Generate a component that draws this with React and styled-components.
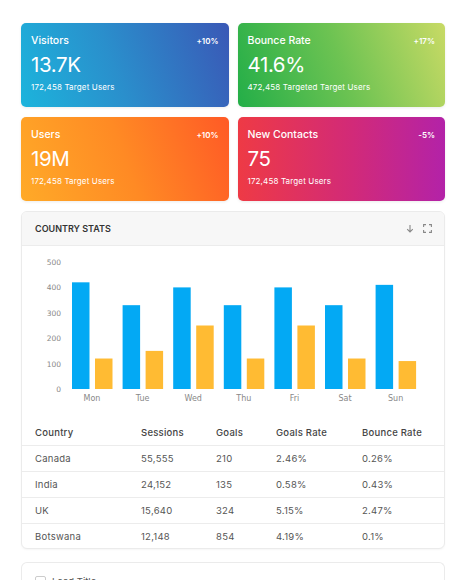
import React from 'react';
import styled, { createGlobalStyle } from 'styled-components';

const GlobalStyle = createGlobalStyle`
	body {
		margin: 0;
		background: #ffffff;
		font-family: Inter, 'Open Sans', sans-serif;
		color: #333;
	}
`;

const Page = styled.div`
	padding: 23px 7px 0 21px;
	display: flex;
	flex-direction: column;
	gap: 10px;
`;

const StatGrid = styled.div`
	display: grid;
	grid-template-columns: 1fr 1fr;
	gap: 10px 9px;
`;

const StatCard = styled.div`
	height: 84px;
	box-sizing: border-box;
	border-radius: 5px;
	padding: 11px 10px 0 10px;
	color: #fff;
	background: ${(p) => p.$bg};
	box-shadow: 0 1px 3px rgba(0, 0, 0, 0.08);
`;

const StatTop = styled.div`
	display: flex;
	justify-content: space-between;
	align-items: center;
`;

const StatTitle = styled.div`
	font-size: 10.5px;
	font-weight: 500;
`;

const StatChange = styled.div`
	font-size: 8px;
	font-weight: 600;
`;

const StatValue = styled.div`
	font-size: 20.5px;
	font-weight: 400;
	margin-top: 5px;
	letter-spacing: -0.4px;
`;

const StatSub = styled.div`
	font-size: 8px;
	letter-spacing: 0.15px;
	margin-top: 5px;
`;

const Card = styled.div`
	border: 1px solid #ebebeb;
	border-radius: 6px;
	background: #fff;
	box-shadow: 0 1px 2px rgba(0, 0, 0, 0.04);
	overflow: hidden;
`;

const CardHeader = styled.div`
	height: 34px;
	box-sizing: border-box;
	background: #f7f7f7;
	border-bottom: 1px solid #ececec;
	display: flex;
	align-items: center;
	justify-content: space-between;
	padding: 0 12px 0 13px;
`;

const CardTitle = styled.div`
	font-size: 9px;
	font-weight: 600;
	color: #333;
`;

const HeaderTools = styled.div`
	display: flex;
	gap: 9px;
	align-items: center;
	color: #888;
`;

const Table = styled.div`
	display: flex;
	flex-direction: column;
`;

const Row = styled.div`
	display: grid;
	grid-template-columns: 106px 75px 60px 86px 1fr;
	padding-left: 13px;
	height: ${(p) => (p.$last ? '24px' : '26px')};
	align-items: center;
	font-size: 9.5px;
	letter-spacing: 0.25px;
	color: ${(p) => (p.$head ? '#444' : '#555')};
	font-weight: ${(p) => (p.$head ? 500 : 400)};
	border-bottom: ${(p) => (p.$last ? 'none' : '1px solid #ececec')};
	box-sizing: border-box;
`;

const LeadCard = styled.div`
	border: 1px solid #ebebeb;
	border-bottom: none;
	border-radius: 6px 6px 0 0;
	height: 30px;
	padding: 8px 13px 0;
	box-sizing: border-box;
	display: flex;
	align-items: center;
	gap: 6px;
	margin-top: 3px;
	font-size: 9.5px;
	color: #555;
`;

const CheckBox = styled.span`
	width: 9px;
	height: 9px;
	border: 1px solid #ccc;
	border-radius: 2px;
`;

const stats = [
	{ title: 'Visitors', change: '+10%', value: '13.7K', sub: '172,458 Target Users', bg: 'linear-gradient(70deg, #1cb4dc 0%, #2a8fcc 45%, #3a58b6 100%)' },
	{ title: 'Bounce Rate', change: '+17%', value: '41.6%', sub: '472,458 Targeted Target Users', bg: 'linear-gradient(70deg, #23ae48 0%, #6dc352 50%, #c8da65 100%)' },
	{ title: 'Users', change: '+10%', value: '19M', sub: '172,458 Target Users', bg: 'linear-gradient(70deg, #ffaa28 0%, #ff8a24 50%, #ff5a26 100%)' },
	{ title: 'New Contacts', change: '-5%', value: '75', sub: '172,458 Target Users', bg: 'linear-gradient(90deg, #ee3a45 0%, #d22a78 55%, #b322a8 100%)' },
];

const days = [
	['Mon', 420, 120],
	['Tue', 330, 150],
	['Wed', 400, 250],
	['Thu', 330, 120],
	['Fri', 400, 250],
	['Sat', 330, 120],
	['Sun', 410, 110],
];

const rows = [
	['Canada', '55,555', '210', '2.46%', '0.26%'],
	['India', '24,152', '135', '0.58%', '0.43%'],
	['UK', '15,640', '324', '5.15%', '2.47%'],
	['Botswana', '12,148', '854', '4.19%', '0.1%'],
];

const BarChart = () => {
	const base = 143;
	const scale = 25.4 / 100;
	return (
		<svg width="424" height="174" style={{ display: 'block' }}>
			{[0, 100, 200, 300, 400, 500].map((v) => (
				<text key={v} x="39" y={base - v * scale + 3} fontSize="7.5" fill="#888" textAnchor="end" fontFamily="'DejaVu Sans', sans-serif">{v}</text>
			))}
			{days.map(([d, a, b], i) => {
				const x = 50 + i * 50.6;
				return (
					<g key={d}>
						<rect x={x} y={base - a * scale} width="17.5" height={a * scale} fill="#03a9f4" />
						<rect x={x + 23} y={base - b * scale} width="17.5" height={b * scale} fill="#ffbb33" />
						<text x={x + 20} y={base + 12} fontSize="8" fill="#888" textAnchor="middle" fontFamily="'DejaVu Sans', sans-serif">{d}</text>
					</g>
				);
			})}
		</svg>
	);
};

const App = () => (
	<>
		<GlobalStyle />
		<Page>
			<StatGrid>
				{stats.map((s) => (
					<StatCard key={s.title} $bg={s.bg}>
						<StatTop>
							<StatTitle>{s.title}</StatTitle>
							<StatChange>{s.change}</StatChange>
						</StatTop>
						<StatValue>{s.value}</StatValue>
						<StatSub>{s.sub}</StatSub>
					</StatCard>
				))}
			</StatGrid>
			<Card>
				<CardHeader>
					<CardTitle>COUNTRY STATS</CardTitle>
					<HeaderTools>
						<svg width="8" height="9" viewBox="0 0 8 9" fill="none" stroke="#888" strokeWidth="1.1">
							<path d="M4 1v7M1.2 5.2 4 8l2.8-2.8" />
						</svg>
						<svg width="9" height="9" viewBox="0 0 9 9" fill="none" stroke="#888" strokeWidth="1.1">
							<path d="M0.6 3V0.6H3M6 0.6h2.4V3M8.4 6v2.4H6M3 8.4H0.6V6" />
						</svg>
					</HeaderTools>
				</CardHeader>
				<BarChart />
				<Table>
					<Row $head>
						<span>Country</span>
						<span>Sessions</span>
						<span>Goals</span>
						<span>Goals Rate</span>
						<span>Bounce Rate</span>
					</Row>
					{rows.map((r, i) => (
						<Row key={r[0]} $last={i === rows.length - 1}>
							{r.map((c) => (
								<span key={c}>{c}</span>
							))}
						</Row>
					))}
				</Table>
			</Card>
			<LeadCard>
				<CheckBox />
				<span>Lead Title</span>
			</LeadCard>
		</Page>
	</>
);

export default App;
